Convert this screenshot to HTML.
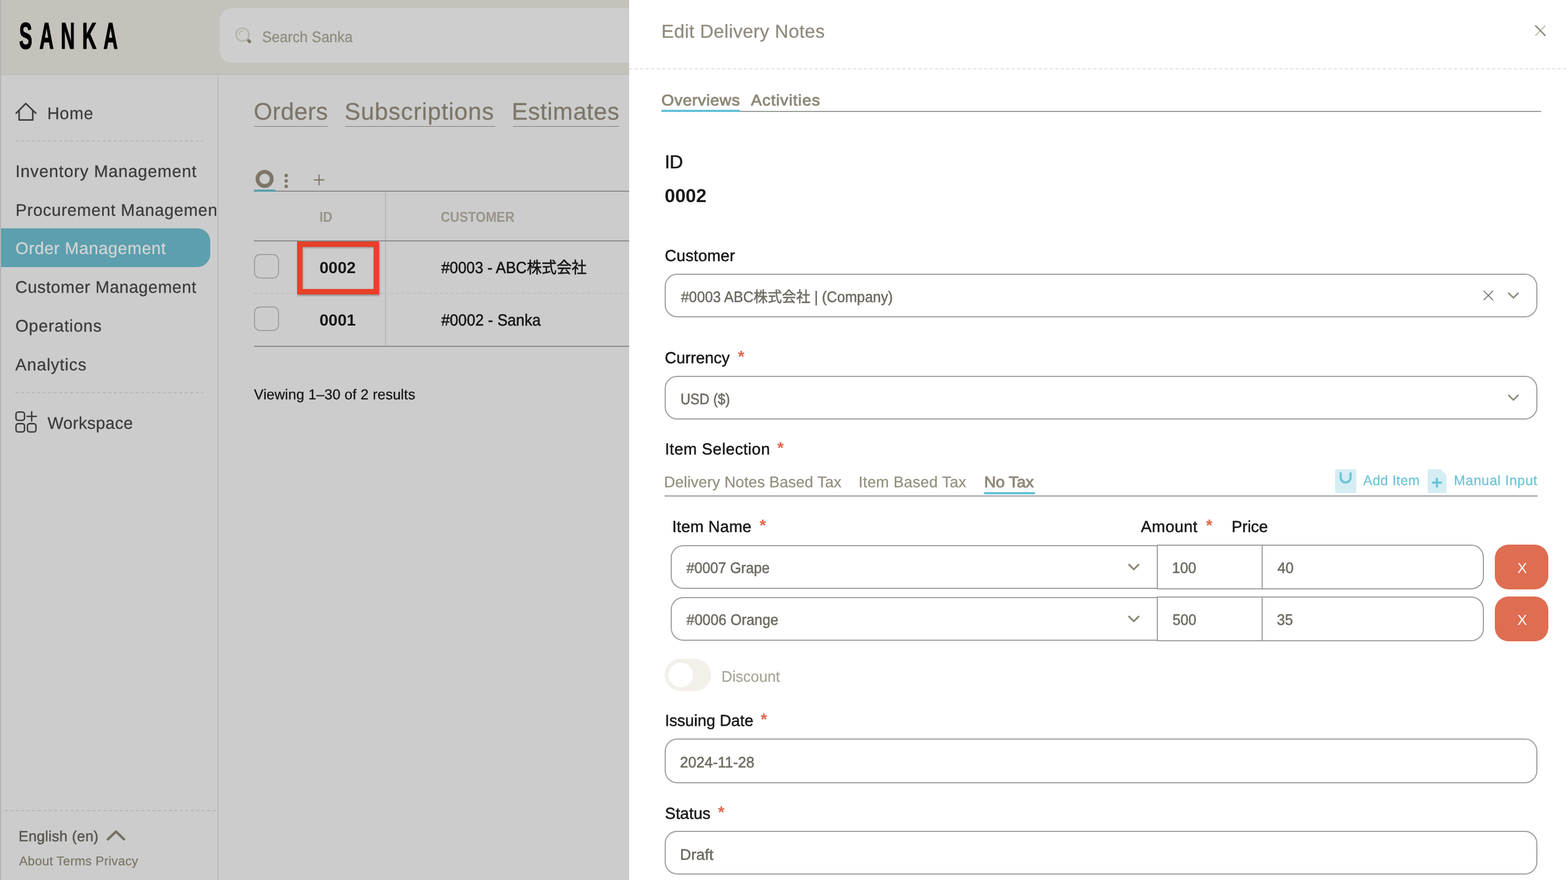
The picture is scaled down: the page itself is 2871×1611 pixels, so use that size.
<!DOCTYPE html>
<html lang="en"><head><meta charset="utf-8"><title>Sanka - Edit Delivery Notes</title>
<meta name="viewport" content="width=2871">
<style>
html,body{margin:0;padding:0}
body{width:2871px;height:1611px;overflow:hidden;background:#cccccc;position:relative;font-family:'Liberation Sans','Noto Sans CJK JP',sans-serif}
#app{position:absolute;left:0;top:0;width:2871px;height:1611px;overflow:hidden;will-change:transform}
.b,.t,.d{position:absolute;display:block}
.t{white-space:nowrap;font-family:'Liberation Sans','Noto Sans CJK JP',sans-serif;text-rendering:geometricPrecision}
.j{font-size:99.0%}
svg{overflow:visible}
</style></head>
<body>
<div id="app">
<div class="b" style="left:0px;top:0px;width:1152px;height:136px;background:#c5c2bc"></div>
<div class="b" style="left:0px;top:135px;width:1152px;height:2px;background:#bcbbb9"></div>
<div class="b" style="left:402px;top:15px;width:800px;height:100px;background:#cecece;border-radius:23px"></div>
<div class="b" style="left:0px;top:0px;width:2px;height:1611px;background:#b4b4b4"></div>
<div class="b" style="left:398px;top:137px;width:2px;height:1474px;background:#bcbcbc"></div>
<svg class="b" style="left:424px;top:44px" width="44" height="44" viewBox="424 44 44 44"><circle cx="444" cy="63.4" r="11.8" fill="none" stroke="#b6b4ac" stroke-width="2.8"/><path d="M437.6 63A6.6 6.6 0 0 1 444.4 56.6" fill="none" stroke="#b6b4ac" stroke-width="2" stroke-linecap="round"/><rect x="452.5" y="72.7" width="7.4" height="5.4" rx="1.3" fill="#7b7466" transform="rotate(45 456.2 75.4)"/></svg>
<svg class="b" style="left:24px;top:184px" width="48" height="42" viewBox="24 184 48 42"><path d="M29.6 207.2 47.2 189.6 65.6 207.2M35 202.5V219.7H60V202.5" fill="none" stroke="#3b3b3b" stroke-width="2.8" stroke-linecap="round" stroke-linejoin="round"/></svg>
<div class="d" style="left:28px;top:257px;width:344px;height:2px;background:repeating-linear-gradient(90deg,#b8b8b8 0 6px,transparent 6px 10px)"></div>
<div class="b" style="left:2px;top:418px;width:383px;height:71px;background:#5c9fae;border-radius:0 24px 24px 0"></div>
<div class="d" style="left:28px;top:718px;width:344px;height:2px;background:repeating-linear-gradient(90deg,#b8b8b8 0 6px,transparent 6px 10px)"></div>
<svg class="b" style="left:24px;top:749px" width="48" height="48" viewBox="24 749 48 48"><g fill="none" stroke="#3b3b3b" stroke-width="2.6" stroke-linecap="round"><rect x="29.3" y="754.3" width="15.6" height="15.2" rx="4"/><rect x="29.3" y="775.6" width="15.6" height="15.2" rx="4"/><rect x="50.3" y="775.6" width="15.6" height="15.2" rx="4"/><path d="M49.5 762.2H66.5M58 753.7V770.7"/></g></svg>
<div class="d" style="left:9px;top:1483px;width:387px;height:2px;background:repeating-linear-gradient(90deg,#b8b8b8 0 6px,transparent 6px 10px)"></div>
<svg class="b" style="left:190px;top:1514px" width="46" height="32" viewBox="190 1514 46 32"><path d="M197.6 1536.4 212.3 1522.4 227 1536.4" fill="none" stroke="#757263" stroke-width="4.6" stroke-linecap="round" stroke-linejoin="round"/></svg>
<div class="b" style="left:465px;top:231px;width:135px;height:1px;background:#7b776d"></div>
<div class="b" style="left:631.5px;top:231px;width:275.5px;height:1px;background:#7b776d"></div>
<div class="b" style="left:938.5px;top:231px;width:195.0px;height:1px;background:#7b776d"></div>
<div class="b" style="left:465px;top:349px;width:690px;height:2px;background:#8a8a8a"></div>
<div class="b" style="left:465px;top:347px;width:39px;height:4px;background:#5a9fb0"></div>
<svg class="b" style="left:464px;top:306px" width="136" height="42" viewBox="464 306 136 42"><circle cx="484.5" cy="327.5" r="13" fill="none" stroke="#7d7668" stroke-width="7"/><g fill="#7d7668"><circle cx="524" cy="321.2" r="3.1"/><circle cx="524" cy="331.2" r="3.1"/><circle cx="524" cy="341.2" r="3.1"/></g><path d="M574.6 329.4H594M584.3 319.6V339.2" stroke="#7d7668" stroke-width="2.2" fill="none"/></svg>
<div class="b" style="left:705px;top:351px;width:2px;height:283px;background:#b8b8b8"></div>
<div class="b" style="left:465px;top:440px;width:690px;height:2px;background:#8a8a8a"></div>
<div class="d" style="left:465px;top:536px;width:690px;height:2px;background:repeating-linear-gradient(90deg,#bfbfbf 0 6px,transparent 6px 10px)"></div>
<div class="b" style="left:465px;top:633px;width:690px;height:2px;background:#8a8a8a"></div>
<div class="b" style="left:465px;top:465px;width:46px;height:45px;border:2px solid #a0a0a0;border-radius:11px;box-sizing:border-box"></div>
<div class="b" style="left:465px;top:561px;width:46px;height:45px;border:2px solid #a0a0a0;border-radius:11px;box-sizing:border-box"></div>
<div class="b" style="left:544px;top:442px;width:150px;height:97px;border:10px solid #e8402a;box-sizing:border-box;box-shadow:1px 2px 3px rgba(0,0,0,.35),inset 1px 2px 3px rgba(0,0,0,.25)"></div>
<div class="t" style="left:86.45px;top:188.3px;font-size:30.7px;line-height:39.9px;font-weight:400;letter-spacing:0.734px;color:#3b3b3b;-webkit-text-stroke:0.3px #3b3b3b;">Home</div>
<div class="t" style="left:28.15px;top:293.9px;font-size:30.7px;line-height:39.9px;font-weight:400;letter-spacing:0.926px;color:#3b3b3b;-webkit-text-stroke:0.3px #3b3b3b;">Inventory Management</div>
<div class="b" style="left:0;top:365.0px;width:396.5px;height:60px;overflow:hidden"><div class="t" style="left:28.55px;top:0;font-size:30.7px;line-height:39.9px;font-weight:400;letter-spacing:0.718px;color:#3b3b3b;-webkit-text-stroke:0.3px #3b3b3b;">Procurement Management</div></div>
<div class="t" style="left:28.15px;top:435.0px;font-size:30.7px;line-height:39.9px;font-weight:400;letter-spacing:0.623px;color:#d4d4d4;-webkit-text-stroke:0.3px #d4d4d4;">Order Management</div>
<div class="t" style="left:27.9px;top:506.0px;font-size:30.7px;line-height:39.9px;font-weight:400;letter-spacing:0.589px;color:#3b3b3b;-webkit-text-stroke:0.3px #3b3b3b;">Customer Management</div>
<div class="t" style="left:28.15px;top:577.0px;font-size:30.7px;line-height:39.9px;font-weight:400;letter-spacing:0.844px;color:#3b3b3b;-webkit-text-stroke:0.3px #3b3b3b;">Operations</div>
<div class="t" style="left:28.1px;top:648.0px;font-size:30.7px;line-height:39.9px;font-weight:400;letter-spacing:0.894px;color:#3b3b3b;-webkit-text-stroke:0.3px #3b3b3b;">Analytics</div>
<div class="t" style="left:87.0px;top:755.0px;font-size:30.7px;line-height:39.9px;font-weight:400;letter-spacing:0.434px;color:#3b3b3b;-webkit-text-stroke:0.3px #3b3b3b;">Workspace</div>
<div class="t" style="left:34.0px;top:1514.0px;font-size:26.66px;line-height:34.7px;font-weight:400;letter-spacing:0.364px;color:#5b5850;-webkit-text-stroke:0.62px #5b5850;">English (en)</div>
<div class="t" style="left:35.0px;top:1561.0px;font-size:23.13px;line-height:30.1px;font-weight:400;letter-spacing:0.347px;color:#7d7668;-webkit-text-stroke:0.3px #7d7668;">About Terms Privacy</div>
<div class="t" style="left:480.2px;top:49.8px;font-size:27.77px;line-height:36.1px;font-weight:400;letter-spacing:0.000px;color:#8f8b7d;-webkit-text-stroke:0.3px #8f8b7d;transform:scaleX(0.9495);transform-origin:0 0;">Search Sanka</div>
<div class="t" style="left:464.5px;top:176.0px;font-size:43.83px;line-height:57.0px;font-weight:400;letter-spacing:0.400px;color:#7d7668;-webkit-text-stroke:0.3px #7d7668;">Orders</div>
<div class="t" style="left:630.75px;top:176.0px;font-size:43.83px;line-height:57.0px;font-weight:400;letter-spacing:0.863px;color:#7d7668;-webkit-text-stroke:0.3px #7d7668;">Subscriptions</div>
<div class="t" style="left:937.0px;top:176.0px;font-size:43.83px;line-height:57.0px;font-weight:400;letter-spacing:0.562px;color:#7d7668;-webkit-text-stroke:0.3px #7d7668;">Estimates</div>
<div class="t" style="left:584.5px;top:380.0px;font-size:26.29px;line-height:34.2px;font-weight:700;letter-spacing:0.000px;color:#99958a;transform:scaleX(0.9005);transform-origin:0 0;">ID</div>
<div class="t" style="left:807.0px;top:380.0px;font-size:26.29px;line-height:34.2px;font-weight:700;letter-spacing:0.000px;color:#99958a;transform:scaleX(0.9005);transform-origin:0 0;">CUSTOMER</div>
<div class="t" style="left:584.75px;top:471.5px;font-size:29.43px;line-height:38.3px;font-weight:700;letter-spacing:0.000px;color:#151515;transform:scaleX(1.0139);transform-origin:0 0;">0002</div>
<div class="t" style="left:808.25px;top:471.5px;font-size:29.74px;line-height:38.7px;font-weight:400;letter-spacing:0.000px;color:#151515;-webkit-text-stroke:0.62px #151515;transform:scaleX(0.9283);transform-origin:0 0;">#0003 - ABC<span class=j>株式会社</span></div>
<div class="t" style="left:584.75px;top:568.0px;font-size:29.43px;line-height:38.3px;font-weight:700;letter-spacing:0.000px;color:#151515;transform:scaleX(1.0139);transform-origin:0 0;">0001</div>
<div class="t" style="left:808.25px;top:568.0px;font-size:29.74px;line-height:38.7px;font-weight:400;letter-spacing:0.000px;color:#151515;-webkit-text-stroke:0.62px #151515;transform:scaleX(0.9407);transform-origin:0 0;">#0002 - Sanka</div>
<div class="t" style="left:465.0px;top:705.0px;font-size:26.26px;line-height:34.1px;font-weight:400;letter-spacing:0.104px;color:#151515;-webkit-text-stroke:0.3px #151515;">Viewing 1–30 of 2 results</div>
<div class="t" style="left:34.7px;top:21.6px;font-size:67.97px;line-height:88.4px;font-weight:700;letter-spacing:24.788px;color:#000000;transform:scaleX(0.5300);transform-origin:0 0;-webkit-text-stroke:1.6px #000;">SANKA</div>
<div class="b" style="left:1152px;top:0px;width:1719px;height:1611px;background:#fff"></div>
<div class="d" style="left:1152px;top:125px;width:1719px;height:2px;background:repeating-linear-gradient(90deg,#e4e2dc 0 6px,transparent 6px 10px)"></div>
<svg class="b" style="left:2804px;top:40px" width="32" height="32" viewBox="2804 40 32 32"><path d="M2829 47.3 2811.8 64.9" stroke="#c9c6be" stroke-width="2.6" stroke-linecap="round"/><path d="M2811.8 47.3 2829 64.9" stroke="#8b8577" stroke-width="2.6" stroke-linecap="round"/></svg>
<div class="b" style="left:1211px;top:203px;width:1611px;height:2px;background:#999"></div>
<div class="b" style="left:1211px;top:201px;width:144px;height:4px;background:#62c0d9"></div>
<div class="b" style="left:1217px;top:501px;width:1598px;height:80px;border:2px solid #9d9d9d;border-radius:23px;box-sizing:border-box"></div>
<svg class="b" style="left:2710px;top:526px" width="30" height="30" viewBox="2710 526 30 30"><path d="M2717 532.8 2733.3 549M2733.3 532.8 2717 549" stroke="#6f6c63" stroke-width="1.7" stroke-linecap="round"/></svg>
<svg class="b" style="left:2755px;top:529px" width="32" height="24" viewBox="2755 529 32 24"><path d="M2762.5 536.8 2771 545.2 2779.5 536.8" fill="none" stroke="#8f8b7d" stroke-width="3.0" stroke-linecap="round" stroke-linejoin="round"/></svg>
<div class="b" style="left:1217px;top:688px;width:1598px;height:80px;border:2px solid #9d9d9d;border-radius:23px;box-sizing:border-box"></div>
<svg class="b" style="left:2755px;top:716px" width="32" height="24" viewBox="2755 716 32 24"><path d="M2762.5 723.8 2771 732.2 2779.5 723.8" fill="none" stroke="#8f8b7d" stroke-width="3.0" stroke-linecap="round" stroke-linejoin="round"/></svg>
<div class="b" style="left:1217px;top:907px;width:1597.5px;height:2px;background:#999"></div>
<div class="b" style="left:1802px;top:901px;width:93px;height:4px;background:#62c0d9"></div>
<svg class="b" style="left:2440px;top:855px" width="48" height="52" viewBox="2440 855 48 52"><rect x="2444.5" y="859" width="39" height="43.5" rx="2" fill="#d5edf3"/><path d="M2454.8 866.2V874.2A9 9 0 0 0 2472.8 874.2V866.2" fill="none" stroke="#6cc4d8" stroke-width="4.1" stroke-linecap="round"/></svg>
<svg class="b" style="left:2610px;top:855px" width="44" height="52" viewBox="2610 855 44 52"><path d="M2616 859H2637.5L2648.5 870V900.5A2 2 0 0 1 2646.5 902.5H2616A2 2 0 0 1 2614 900.5V861A2 2 0 0 1 2616 859Z" fill="#d5edf3"/><path d="M2623.6 883.6H2638.4M2631 876.2V891" stroke="#6cc4d8" stroke-width="4" stroke-linecap="round"/></svg>
<div class="b" style="left:1228px;top:998px;width:891px;height:80px;border:2px solid #9d9d9d;border-right:none;border-radius:23px 0 0 23px;box-sizing:border-box"></div>
<div class="b" style="left:2118px;top:997px;width:194px;height:82px;border:2px solid #9d9d9d;box-sizing:border-box"></div>
<div class="b" style="left:2310px;top:997px;width:406.5px;height:82px;border:2px solid #9d9d9d;border-radius:0 23px 23px 0;box-sizing:border-box"></div>
<svg class="b" style="left:2060px;top:1025.8px" width="32" height="24" viewBox="2060 1025.8 32 24"><path d="M2067.2 1033.3999999999999 2076 1042.2 2084.8 1033.3999999999999" fill="none" stroke="#8b8577" stroke-width="3.2" stroke-linecap="round" stroke-linejoin="round"/></svg>
<div class="b" style="left:2737px;top:997px;width:98px;height:82px;background:#df6d51;border-radius:25px"></div>
<div class="b" style="left:1228px;top:1093px;width:891px;height:80px;border:2px solid #9d9d9d;border-right:none;border-radius:23px 0 0 23px;box-sizing:border-box"></div>
<div class="b" style="left:2118px;top:1092px;width:194px;height:82px;border:2px solid #9d9d9d;box-sizing:border-box"></div>
<div class="b" style="left:2310px;top:1092px;width:406.5px;height:82px;border:2px solid #9d9d9d;border-radius:0 23px 23px 0;box-sizing:border-box"></div>
<svg class="b" style="left:2060px;top:1120.8px" width="32" height="24" viewBox="2060 1120.8 32 24"><path d="M2067.2 1128.3999999999999 2076 1137.2 2084.8 1128.3999999999999" fill="none" stroke="#8b8577" stroke-width="3.2" stroke-linecap="round" stroke-linejoin="round"/></svg>
<div class="b" style="left:2737px;top:1092px;width:98px;height:82px;background:#df6d51;border-radius:25px"></div>
<div class="b" style="left:1217px;top:1206px;width:85px;height:59px;background:#f3f0ea;border-radius:30px"></div>
<div class="b" style="left:1224px;top:1213px;width:45px;height:45px;background:#fff;border-radius:50%"></div>
<div class="b" style="left:1217px;top:1352px;width:1598px;height:82px;border:2px solid #9d9d9d;border-radius:23px;box-sizing:border-box"></div>
<div class="b" style="left:1217px;top:1521px;width:1598px;height:80px;border:2px solid #9d9d9d;border-radius:23px;box-sizing:border-box"></div>
<div class="t" style="left:1210.95px;top:35.7px;font-size:34.3px;line-height:44.6px;font-weight:400;letter-spacing:0.419px;color:#908b7d;-webkit-text-stroke:0.3px #908b7d;">Edit Delivery Notes</div>
<div class="t" style="left:1211.05px;top:164.5px;font-size:28.28px;line-height:36.8px;font-weight:400;letter-spacing:0.589px;color:#8f8979;-webkit-text-stroke:1.05px #8f8979;transform:scaleX(1.0500);transform-origin:0 0;">Overviews</div>
<div class="t" style="left:1375.25px;top:164.5px;font-size:28.28px;line-height:36.8px;font-weight:400;letter-spacing:0.979px;color:#8f8979;-webkit-text-stroke:1.05px #8f8979;transform:scaleX(1.0500);transform-origin:0 0;">Activities</div>
<div class="t" style="left:1217.05px;top:274.8px;font-size:34.23px;line-height:44.5px;font-weight:400;letter-spacing:-0.600px;color:#1b1b1b;-webkit-text-stroke:0.62px #1b1b1b;">ID</div>
<div class="t" style="left:1216.75px;top:336.8px;font-size:34.23px;line-height:44.5px;font-weight:700;letter-spacing:0.000px;color:#1b1b1b;transform:scaleX(1.0068);transform-origin:0 0;">0002</div>
<div class="t" style="left:1217.35px;top:449.9px;font-size:29.22px;line-height:38.0px;font-weight:400;letter-spacing:0.264px;color:#1b1b1b;-webkit-text-stroke:0.62px #1b1b1b;">Customer</div>
<div class="t" style="left:1246.55px;top:526.0px;font-size:27.83px;line-height:36.2px;font-weight:400;letter-spacing:0.000px;color:#6f6c63;-webkit-text-stroke:0.62px #6f6c63;transform:scaleX(0.9426);transform-origin:0 0;">#0003 ABC<span class=j>株式会社</span> | (Company)</div>
<div class="t" style="left:1217.35px;top:636.5px;font-size:29.22px;line-height:38.0px;font-weight:400;letter-spacing:0.021px;color:#1b1b1b;-webkit-text-stroke:0.62px #1b1b1b;">Currency</div>
<div class="t" style="left:1245.55px;top:713.0px;font-size:27.83px;line-height:36.2px;font-weight:400;letter-spacing:0.000px;color:#6f6c63;-webkit-text-stroke:0.62px #6f6c63;transform:scaleX(0.9018);transform-origin:0 0;">USD ($)</div>
<div class="t" style="left:1217.4px;top:803.5px;font-size:29.22px;line-height:38.0px;font-weight:400;letter-spacing:0.546px;color:#1b1b1b;-webkit-text-stroke:0.62px #1b1b1b;">Item Selection</div>
<div class="t" style="left:1215.75px;top:864.0px;font-size:28.28px;line-height:36.8px;font-weight:400;letter-spacing:0.076px;color:#969080;-webkit-text-stroke:0.3px #969080;">Delivery Notes Based Tax</div>
<div class="t" style="left:1572.0px;top:864.0px;font-size:28.28px;line-height:36.8px;font-weight:400;letter-spacing:0.212px;color:#969080;-webkit-text-stroke:0.3px #969080;">Item Based Tax</div>
<div class="t" style="left:1802.0px;top:863.5px;font-size:28.28px;line-height:36.8px;font-weight:400;letter-spacing:-0.190px;color:#8f8979;-webkit-text-stroke:1.05px #8f8979;transform:scaleX(1.0500);transform-origin:0 0;">No Tax</div>
<div class="t" style="left:2496.0px;top:864.0px;font-size:25.05px;line-height:32.6px;font-weight:400;letter-spacing:0.464px;color:#6cc4d8;-webkit-text-stroke:0.3px #6cc4d8;">Add Item</div>
<div class="t" style="left:2662.0px;top:864.0px;font-size:25.05px;line-height:32.6px;font-weight:400;letter-spacing:0.705px;color:#6cc4d8;-webkit-text-stroke:0.3px #6cc4d8;">Manual Input</div>
<div class="t" style="left:1230.7px;top:945.5px;font-size:29.22px;line-height:38.0px;font-weight:400;letter-spacing:0.287px;color:#1b1b1b;-webkit-text-stroke:0.62px #1b1b1b;">Item Name</div>
<div class="t" style="left:2088.95px;top:945.5px;font-size:29.22px;line-height:38.0px;font-weight:400;letter-spacing:0.564px;color:#1b1b1b;-webkit-text-stroke:0.62px #1b1b1b;">Amount</div>
<div class="t" style="left:2255.0px;top:945.5px;font-size:29.22px;line-height:38.0px;font-weight:400;letter-spacing:-0.036px;color:#1b1b1b;-webkit-text-stroke:0.62px #1b1b1b;">Price</div>
<div class="t" style="left:1257.15px;top:1022.0px;font-size:27.83px;line-height:36.2px;font-weight:400;letter-spacing:0.000px;color:#6f6c63;-webkit-text-stroke:0.62px #6f6c63;transform:scaleX(0.9372);transform-origin:0 0;">#0007 Grape</div>
<div class="t" style="left:2146.35px;top:1021.5px;font-size:27.83px;line-height:36.2px;font-weight:400;letter-spacing:0.000px;color:#6f6c63;-webkit-text-stroke:0.62px #6f6c63;transform:scaleX(0.9545);transform-origin:0 0;">100</div>
<div class="t" style="left:2338.55px;top:1021.5px;font-size:27.83px;line-height:36.2px;font-weight:400;letter-spacing:0.000px;color:#6f6c63;-webkit-text-stroke:0.62px #6f6c63;transform:scaleX(0.9548);transform-origin:0 0;">40</div>
<div class="t" style="left:2778.25px;top:1022.5px;font-size:26.5px;line-height:34.5px;font-weight:400;letter-spacing:0.000px;color:#ffffff;transform:scaleX(1.0000);transform-origin:0 0;">X</div>
<div class="t" style="left:1257.15px;top:1116.5px;font-size:27.83px;line-height:36.2px;font-weight:400;letter-spacing:0.000px;color:#6f6c63;-webkit-text-stroke:0.62px #6f6c63;transform:scaleX(0.9456);transform-origin:0 0;">#0006 Orange</div>
<div class="t" style="left:2147.35px;top:1116.5px;font-size:27.83px;line-height:36.2px;font-weight:400;letter-spacing:0.000px;color:#6f6c63;-webkit-text-stroke:0.62px #6f6c63;transform:scaleX(0.9333);transform-origin:0 0;">500</div>
<div class="t" style="left:2338.05px;top:1116.5px;font-size:27.83px;line-height:36.2px;font-weight:400;letter-spacing:0.000px;color:#6f6c63;-webkit-text-stroke:0.62px #6f6c63;transform:scaleX(0.9548);transform-origin:0 0;">35</div>
<div class="t" style="left:2778.25px;top:1117.5px;font-size:26.5px;line-height:34.5px;font-weight:400;letter-spacing:0.000px;color:#ffffff;transform:scaleX(1.0000);transform-origin:0 0;">X</div>
<div class="t" style="left:1320.5px;top:1220.5px;font-size:27.83px;line-height:36.2px;font-weight:400;letter-spacing:0.000px;color:#aaa699;-webkit-text-stroke:0.3px #aaa699;transform:scaleX(0.9906);transform-origin:0 0;">Discount</div>
<div class="t" style="left:1217.4px;top:1301.0px;font-size:29.22px;line-height:38.0px;font-weight:400;letter-spacing:-0.036px;color:#1b1b1b;-webkit-text-stroke:0.62px #1b1b1b;">Issuing Date</div>
<div class="t" style="left:1245.4px;top:1378.0px;font-size:27.83px;line-height:36.2px;font-weight:400;letter-spacing:0.000px;color:#6f6c63;-webkit-text-stroke:0.62px #6f6c63;transform:scaleX(0.9718);transform-origin:0 0;">2024-11-28</div>
<div class="t" style="left:1217.6px;top:1470.5px;font-size:29.22px;line-height:38.0px;font-weight:400;letter-spacing:0.080px;color:#1b1b1b;-webkit-text-stroke:0.62px #1b1b1b;">Status</div>
<div class="t" style="left:1245.4px;top:1547.0px;font-size:27.83px;line-height:36.2px;font-weight:400;letter-spacing:0.000px;color:#6f6c63;-webkit-text-stroke:0.62px #6f6c63;transform:scaleX(1.0154);transform-origin:0 0;">Draft</div>
<div class="t" style="left:1351.25px;top:634.0px;font-size:30.0px;line-height:39.0px;font-weight:700;letter-spacing:0.000px;color:#e0664b;">*</div>
<div class="t" style="left:1423.25px;top:801.0px;font-size:30.0px;line-height:39.0px;font-weight:700;letter-spacing:0.000px;color:#e0664b;">*</div>
<div class="t" style="left:1390.75px;top:942.5px;font-size:30.0px;line-height:39.0px;font-weight:700;letter-spacing:0.000px;color:#e0664b;">*</div>
<div class="t" style="left:2208.25px;top:942.5px;font-size:30.0px;line-height:39.0px;font-weight:700;letter-spacing:0.000px;color:#e0664b;">*</div>
<div class="t" style="left:1392.75px;top:1298.0px;font-size:30.0px;line-height:39.0px;font-weight:700;letter-spacing:0.000px;color:#e0664b;">*</div>
<div class="t" style="left:1314.75px;top:1467.5px;font-size:30.0px;line-height:39.0px;font-weight:700;letter-spacing:0.000px;color:#e0664b;">*</div>
</div>
</body></html>
